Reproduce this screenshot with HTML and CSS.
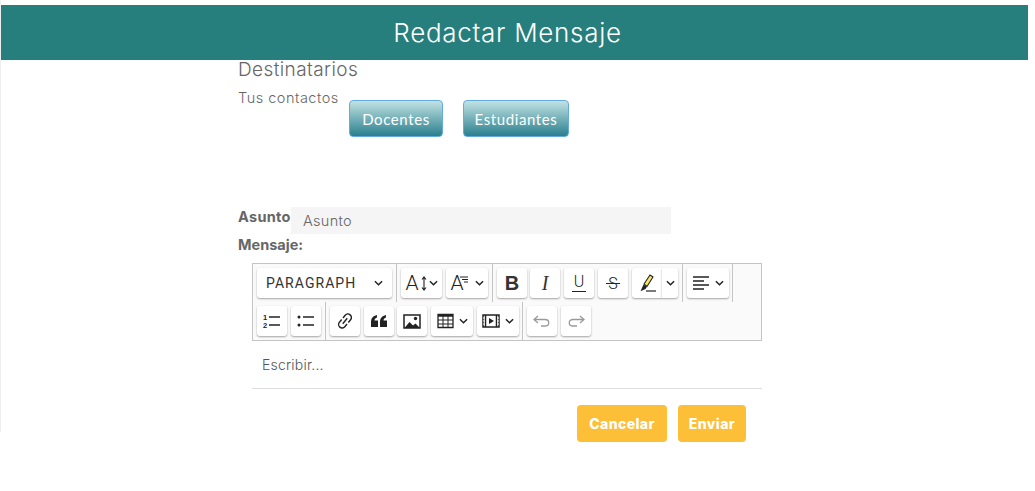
FILE: index.html
```html
<!DOCTYPE html>
<html lang="es">
<head>
    <meta charset="UTF-8">
    <meta name="viewport" content="width=device-width, initial-scale=1.0">
    <title>Redactar Mensaje</title>
    <link rel="stylesheet" href="styles.css">
</head>
<body>
    <div class="pagina">
        <header class="cabecera">Redactar Mensaje</header>

        <main class="contenido">
            <h2 class="destinatarios">Destinatarios</h2>
            <div class="contactos">
                <span class="contactos-label">Tus contactos</span>
                <button class="btn-contacto btn-docentes" type="button">Docentes</button>
                <button class="btn-contacto" type="button">Estudiantes</button>
            </div>

            <div class="asunto">
                <label class="etiqueta" for="asunto">Asunto</label>
                <input class="asunto-input" id="asunto" type="text" placeholder="Asunto">
            </div>
            <div class="etiqueta mensaje-label">Mensaje:</div>

            <div class="editor">
                <div class="toolbar">
                    <div class="fila">
                        <button class="tb tb-parrafo" type="button">PARAGRAPH
                            <svg class="flecha" viewBox="0 0 10 6"><path d="M1 1l4 4 4-4"/></svg>
                        </button>
                        <span class="sep"></span>
                        <button class="tb tb-w41" type="button">
                            <span class="txt-a">A</span>
                            <svg class="ico-alto" viewBox="0 0 6 15"><path d="M3 1v13M1 3.500L3 1l2 2.500M1 11.500L3 14l2-2.500"/></svg>
                            <svg class="flecha" viewBox="0 0 10 6"><path d="M1 1l4 4 4-4"/></svg>
                        </button>
                        <button class="tb tb-w42 tb-estilo" type="button">
                            <span class="txt-a">A</span>
                            <svg class="ico-lineas" viewBox="0 0 8 7"><path d="M0 1h8M2 3.500h6M4 6h4"/></svg>
                            <svg class="flecha" viewBox="0 0 10 6"><path d="M1 1l4 4 4-4"/></svg>
                        </button>
                        <span class="sep"></span>
                        <button class="tb txt-b" type="button">B</button>
                        <button class="tb txt-i tb-junto" type="button">I</button>
                        <button class="tb txt-u" type="button">U</button>
                        <button class="tb txt-s" type="button">S</button>
                        <button class="tb tb-marcador" type="button">
                            <svg width="20" height="20" viewBox="0 0 20 20"><path d="M7 11l6-9 3 2-6 9.500z" fill="#f5e66a" stroke="#222" stroke-width="1.100"/><path d="M6.500 11.500l3.500 2.200-1.500 2.300-5 2.200z" fill="#222"/><path d="M9 18h10" stroke="#222" stroke-width="1.200"/></svg>
                        </button>
                        <button class="tb tb-marcador-flecha" type="button">
                            <svg class="flecha" viewBox="0 0 10 6"><path d="M1 1l4 4 4-4"/></svg>
                        </button>
                        <span class="sep"></span>
                        <button class="tb tb-w42" type="button">
                            <svg class="ico-linea" width="17" height="16" viewBox="0 0 17 16"><path d="M0 2h16M0 6h11M0 10h16M0 14h11"/></svg>
                            <svg class="flecha" viewBox="0 0 10 6"><path d="M1 1l4 4 4-4"/></svg>
                        </button>
                        <span class="sep tb-junto"></span>
                    </div>
                    <div class="fila">
                        <button class="tb" type="button">
                            <svg width="18" height="16" viewBox="0 0 18 16"><text class="num-lista" x="0" y="6.500">1</text><text class="num-lista" x="0" y="14.500">2</text><path d="M6 4h11M6 12h11" stroke="#222" stroke-width="1.300"/></svg>
                        </button>
                        <button class="tb" type="button">
                            <svg width="18" height="16" viewBox="0 0 18 16"><circle cx="2" cy="4" r="1.500" fill="#222"/><circle cx="2" cy="12" r="1.500" fill="#222"/><path d="M6 4h11M6 12h11" stroke="#222" stroke-width="1.300"/></svg>
                        </button>
                        <span class="sep"></span>
                        <button class="tb" type="button">
                            <svg class="ico-linea" width="18" height="18" viewBox="0 0 18 18"><g transform="rotate(-50 9 9)"><path d="M8 5.500H4.500a3.500 3.500 0 0 0 0 7H8M10 5.500h3.500a3.500 3.500 0 0 1 0 7H10M5.500 9h7" stroke-width="1.400"/></g></svg>
                        </button>
                        <button class="tb" type="button">
                            <svg width="16" height="12" viewBox="0 0 16 12" fill="#222"><path d="M0 12V7C0 3 2 1 6 0v2.500C4.500 3 3.500 4 3.500 5.500H7V12zM9 12V7c0-4 2-6 6-7v2.500c-1.500.5-2.500 1.500-2.500 3H16V12z"/></svg>
                        </button>
                        <button class="tb tb-junto" type="button">
                            <svg width="18" height="15" viewBox="0 0 18 15"><path d="M1 1h16v13H1z" fill="#fff" stroke="#222" stroke-width="1.500"/><path d="M1.500 14l5-6 3.500 3.500 2.500-2 4.500 4.500z" fill="#222"/><circle cx="12.500" cy="4.500" r="1.700" fill="#222"/></svg>
                        </button>
                        <button class="tb tb-w42" type="button">
                            <svg class="ico-linea" width="17" height="16" viewBox="0 0 17 16"><path d="M1 1.500h15v13H1z" stroke-width="1.300"/><path d="M1 2.500h15" stroke-width="2.500"/><path d="M1 7h15M1 11h15M6 2v12M11 2v12" stroke-width="1"/></svg>
                            <svg class="flecha" viewBox="0 0 10 6"><path d="M1 1l4 4 4-4"/></svg>
                        </button>
                        <button class="tb tb-w42" type="button">
                            <svg width="18" height="14" viewBox="0 0 18 14"><path d="M1 1h16v12H1z" fill="#fff" stroke="#222" stroke-width="1.500"/><path d="M3.500 1v12M14.500 1v12" stroke="#222" stroke-width="1.500"/><path d="M7 4l5 3-5 3z" fill="#222"/><path d="M1 4h2M1 7h2M1 10h2M15 4h2M15 7h2M15 10h2" stroke="#fff" stroke-width="1"/></svg>
                            <svg class="flecha" viewBox="0 0 10 6"><path d="M1 1l4 4 4-4"/></svg>
                        </button>
                        <span class="sep tb-junto"></span>
                        <button class="tb" type="button">
                            <svg class="ico-gris" width="18" height="12" viewBox="0 0 18 12"><path d="M5 1L1 4.500 5 8M1 4.500h11c5 0 5 6.500 0 6.500H8"/></svg>
                        </button>
                        <button class="tb" type="button">
                            <svg class="ico-gris" width="18" height="12" viewBox="0 0 18 12"><path d="M13 1l4 3.500L13 8M17 4.500H6c-5 0-5 6.500 0 6.500h4"/></svg>
                        </button>
                    </div>
                </div>
                <div class="escribir">Escribir...</div>
            </div>

            <div class="acciones">
                <button class="btn-accion btn-cancelar" type="button">Cancelar</button>
                <button class="btn-accion btn-enviar" type="button">Enviar</button>
            </div>
        </main>
    </div>
</body>
</html>
```

FILE: styles.css
```css
body {
    font-family: "Inter", "Liberation Sans", sans-serif;
    margin: 0;
    padding: 0;
    background-color: #fff;
    color: #666;
}

/* la linea gris de la izquierda llega solo hasta y=432 */
.pagina {
    width: 1028px;
    min-height: 486px;
    padding: 5px 0 0 1px;
    background: linear-gradient(#eee, #eee) 0 0 / 1px 432px no-repeat;
    box-sizing: border-box;
}

.cabecera {
    height: 55px;
    line-height: 55px;
    padding-right: 14px;
    background-color: #267f7d;
    color: #fff;
    font-size: 26px;
    font-weight: 300;
    text-align: center;
    letter-spacing: 0.7px;
}

.contenido {
    padding-left: 237px;
}

.destinatarios {
    margin: 0;
    height: 22px;
    line-height: 20px;
    font-size: 19px;
    font-weight: 300;
    letter-spacing: 0.4px;
}

.contactos {
    display: flex;
    align-items: flex-start;
    height: 125px;
}

.contactos-label {
    font-size: 14.500px;
    font-weight: 300;
    letter-spacing: 0.5px;
    line-height: 32px;
    height: 32px;
    width: 111px;
}

.btn-contacto {
    width: 106px;
    height: 37px;
    margin-top: 18px;
    padding: 0;
    border: 1px solid #63ace0;
    border-radius: 4px;
    background: linear-gradient(to bottom, #c2e2e4, #2a808e);
    color: #fff;
    font-family: "Lato", sans-serif;
    font-size: 15px;
    letter-spacing: 0.6px;
}

.btn-docentes {
    width: 94px;
    margin-right: 20px;
}

.asunto {
    display: flex;
    align-items: flex-start;
}

.etiqueta {
    font-size: 14.500px;
    font-weight: 700;
    color: #666;
}

.asunto .etiqueta {
    width: 53px;
    line-height: 20px;
    letter-spacing: 0.3px;
}

.asunto-input {
    width: 380px;
    height: 27px;
    padding: 0 12px;
    border: none;
    background-color: #f5f5f5;
    box-sizing: border-box;
    font-family: inherit;
    font-size: 14.500px;
    font-weight: 300;
    letter-spacing: 0.3px;
}

.asunto-input::placeholder {
    color: #666;
}

.mensaje-label {
    height: 29px;
    line-height: 22px;
}

.editor {
    width: 510px;
    margin-left: 14px;
}

.toolbar {
    background-color: #fafafa;
    border: 1px solid #c4c4c4;
    padding: 0 4px;
}

.fila {
    display: flex;
    align-items: stretch;
    gap: 4px;
    height: 38px;
}

.tb {
    position: relative;
    display: flex;
    align-items: center;
    justify-content: center;
    gap: 2px;
    width: 30px;
    height: 30px;
    margin: 4px 0;
    padding: 0;
    border: none;
    border-radius: 3px;
    background-color: #fff;
    box-shadow: 0 1px 2px rgba(0, 0, 0, 0.35);
    color: #222;
    font-size: 17px;
}

.tb-junto {
    margin-left: -1px;
}

.tb-parrafo {
    width: 135px;
    justify-content: space-between;
    padding: 0 9px;
    box-sizing: border-box;
    font-family: "Roboto", sans-serif;
    font-size: 14px;
    font-weight: 400;
    letter-spacing: 1.050px;
    color: #333;
}

.tb-w41 {
    width: 41px;
}

.tb-w42 {
    width: 42px;
    gap: 5px;
}

.tb-estilo {
    gap: 0;
}

.tb-marcador {
    border-radius: 3px 0 0 3px;
}

.tb-marcador-flecha {
    width: 16px;
    margin-left: -4px;
    border-radius: 0 3px 3px 0;
}

.sep {
    width: 1px;
    background-color: #c4c4c4;
}

.txt-a {
    font-family: "Roboto", sans-serif;
    font-size: 21px;
    font-weight: 300;
}

.txt-b {
    font-family: "Liberation Sans", sans-serif;
    font-size: 20px;
    font-weight: 700;
    color: #333;
}

.txt-i {
    font-family: "Liberation Serif", serif;
    font-size: 20px;
    font-style: italic;
    color: #333;
}

.txt-u,
.txt-s {
    font-family: "Roboto", sans-serif;
    font-size: 16px;
    font-weight: 300;
    color: #222;
}

.txt-u {
    padding-bottom: 3px;
}

/* lineas de subrayado y tachado, mas anchas que la letra */
.txt-u::after,
.txt-s::after {
    content: "";
    position: absolute;
    left: 8px;
    width: 14px;
    height: 1px;
    background-color: #222;
}

.txt-u::after {
    top: 23px;
}

.txt-s::after {
    top: 15px;
}

.flecha {
    flex: none;
    width: 9px;
    height: 6px;
    fill: none;
    stroke: #222;
    stroke-width: 1.600;
}

.ico-alto {
    width: 6px;
    height: 15px;
    fill: none;
    stroke: #222;
    stroke-width: 1.100;
}

.ico-lineas {
    width: 8px;
    height: 7px;
    margin: -8px 7px 0 -4px;
    fill: none;
    stroke: #222;
}

.ico-linea {
    fill: none;
    stroke: #222;
    stroke-width: 1.500;
}

.ico-gris {
    fill: none;
    stroke: #9a9a9a;
    stroke-width: 1.300;
}

.num-lista {
    font-family: "Liberation Sans", sans-serif;
    font-size: 7.500px;
    font-weight: 700;
    fill: #222;
}

.escribir {
    height: 47px;
    line-height: 47px;
    padding-left: 10px;
    border-bottom: 1px solid #ddd;
    font-size: 14px;
    font-weight: 300;
    letter-spacing: 0.2px;
    color: #555;
}

.acciones {
    display: flex;
    gap: 11px;
    margin: 16px 0 0 339px;
}

.btn-accion {
    height: 37px;
    padding: 0;
    border: none;
    border-radius: 4px;
    background-color: #fdbe38;
    color: #fff;
    font-family: "Inter", sans-serif;
    font-size: 14px;
    font-weight: 800;
    letter-spacing: 0.4px;
}

.btn-cancelar {
    width: 90px;
}

.btn-enviar {
    width: 68px;
}
```
